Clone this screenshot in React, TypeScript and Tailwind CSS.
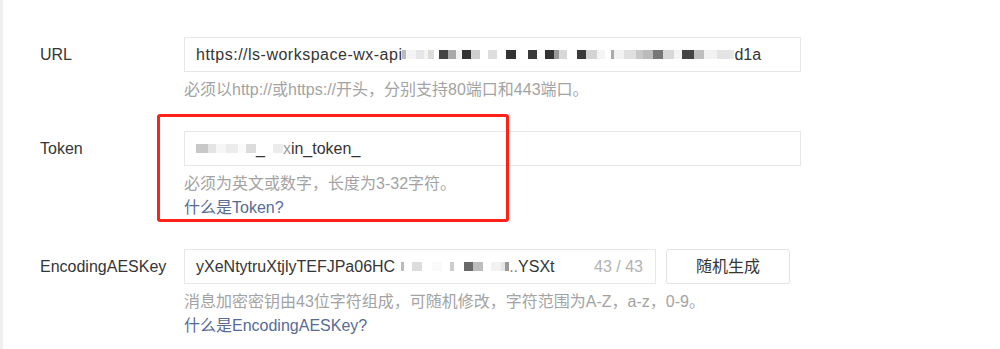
import React from "react";

type Seg = [number, string];

// pixelated redaction strips drawn as little blocks
const Mosaic = ({ segs }: { segs: Seg[] }) => (
  <span className="inline-flex items-center h-[20px] align-middle">
    {segs.map(([w, c], i) => (
      <span key={i} className="inline-block h-[9px]" style={{ width: w, background: c }} />
    ))}
  </span>
);

const urlBlur: Seg[] = [
  [4, "#bbb"], [10, "#f4f4f4"], [8, "#e6e6e6"], [4, "#f4f4f4"], [6, "#dcdcdc"], [5, "#fff"], [9, "#444"], [8, "#aaa"], [6, "#f2f2f2"], [9, "#333"], [9, "#cfcfcf"], [8, "#fff"], [9, "#dedede"], [9, "#fff"], [10, "#333"],
  [12, "#fff"], [9, "#3a3a3a"], [8, "#fff"], [9, "#333"], [5, "#999"], [8, "#d8d8d8"], [10, "#fff"], [9, "#3a3a3a"], [11, "#d4d4d4"], [8, "#f4f4f4"], [6, "#fff"],
  [3, "#aaa"], [10, "#f2f2f2"], [12, "#e0e0e0"], [7, "#c8c8c8"], [10, "#bbb"], [10, "#777"], [11, "#d8d8d8"], [8, "#f4f4f4"], [12, "#444"], [10, "#bfbfbf"], [13, "#f2f2f2"], [13, "#e4e4e4"], [4, "#e8e8e8"],
];

const tokenBlur: Seg[] = [
  [12, "#c8c8c8"], [8, "#e4e4e4"], [10, "#f6f6f6"], [12, "#ececec"], [8, "#fafafa"], [10, "#dcdcdc"],
];

const aesBlur: Seg[] = [
  [6, "#fff"], [3, "#bbb"], [8, "#fff"], [10, "#dcdcdc"], [10, "#fff"], [10, "#fafafa"], [8, "#fff"], [4, "#ccc"], [10, "#fff"], [9, "#6a6a6a"], [10, "#bdbdbd"], [8, "#fff"], [10, "#f2f2f2"], [4, "#e6e6e6"], [4, "#999"],
];

const Field = ({
  label,
  children,
  hint,
  link,
}: {
  label: string;
  children: React.ReactNode;
  hint: string;
  link?: string;
}) => (
  <div className="flex">
    <div className="w-[181px] shrink-0 pl-[37px] h-[35px] flex items-center text-[16px] text-[#353535]">{label}</div>
    <div className="flex flex-col">
      {children}
      <p className="mt-[6px] leading-6 text-[16px] text-[#a3a3a3] whitespace-nowrap">{hint}</p>
      {link && <a className="leading-6 text-[16px] text-[#576b95]">{link}</a>}
    </div>
  </div>
);

export default function App() {
  return (
    <div
      className="relative w-[1000px] h-[349px] bg-white flex overflow-hidden"
      style={{ fontFamily: '"Liberation Sans", "Noto Sans CJK SC", sans-serif' }}
    >
      <div className="w-[3px] shrink-0 bg-[#efefef]" />
      <div className="flex flex-col gap-[29px] pt-[37px]">
        <Field label="URL" hint="必须以http://或https://开头，分别支持80端口和443端口。">
          <div className="w-[617px] h-[35px] border border-[#e7e7e7] px-[11px] flex items-center text-[16px] text-[#353535] whitespace-nowrap overflow-hidden">
            <span className="tracking-[0.5px]">https://ls-workspace-wx-api</span>
            <Mosaic segs={urlBlur} />
            d1a
          </div>
        </Field>

        <Field label="Token" hint="必须为英文或数字，长度为3-32字符。" link="什么是Token?">
          <div className="w-[617px] h-[35px] border border-[#e7e7e7] px-[11px] flex items-center text-[16px] text-[#353535] whitespace-nowrap">
            <Mosaic segs={tokenBlur} />
            <span>_</span>
            <Mosaic segs={[[8, "#fff"], [10, "#ececec"]]} />
            <span className="text-[#9a9a9a]">x</span>in_token_
          </div>
        </Field>

        <Field
          label="EncodingAESKey"
          hint="消息加密密钥由43位字符组成，可随机修改，字符范围为A-Z，a-z，0-9。"
          link="什么是EncodingAESKey?"
        >
          <div className="flex gap-[10px]">
            <div className="w-[472px] h-[35px] border border-[#e7e7e7] pl-[11px] pr-[12px] flex items-center text-[16px] text-[#353535] whitespace-nowrap overflow-hidden">
              yXeNtytruXtjlyTEFJPa06HC
              <Mosaic segs={aesBlur} />
              <span className="text-[#888]">..</span>YSXt
              <span className="ml-auto text-[#b2b2b2]">43 / 43</span>
            </div>
            <button className="w-[124px] h-[35px] border border-[#e2e2e2] rounded-[3px] text-[16px] text-[#353535] bg-white">
              随机生成
            </button>
          </div>
        </Field>
      </div>

      {/* annotation box over the token field */}
      <div className="absolute left-[157px] top-[114px] w-[352px] h-[108px] border-[3px] border-[#ff2218] rounded-[3px]" />
    </div>
  );
}
